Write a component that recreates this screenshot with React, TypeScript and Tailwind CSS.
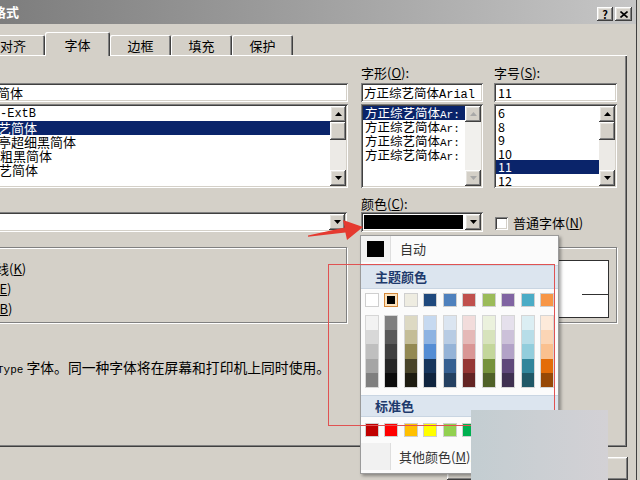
import React from "react";

const RAISED =
  "shadow-[inset_-1px_-1px_#404040,inset_1px_1px_#ffffff,inset_-2px_-2px_#808080,inset_2px_2px_#e6e4df]";
const SUNKEN =
  "shadow-[inset_1px_1px_#808080,inset_-1px_-1px_#ffffff,inset_2px_2px_#404040,inset_-2px_-2px_#d4d0c8]";
const ETCHED = "border border-[#808080] shadow-[inset_1px_1px_#ffffff,1px_1px_#ffffff]";

function Tri({ up, disabled }: { up?: boolean; disabled?: boolean }) {
  return (
    <svg width="7" height="4" viewBox="0 0 7 4">
      <path d={up ? "M3.5 0 L7 4 L0 4Z" : "M0 0 L7 0 L3.5 4Z"} fill={disabled ? "#a8a8a8" : "#000000"} />
    </svg>
  );
}

function SBtn({ up, disabled }: { up?: boolean; disabled?: boolean }) {
  return (
    <div className={`w-[16px] h-[16px] shrink-0 bg-[#d4d0c8] flex items-center justify-center ${RAISED}`}>
      <Tri up={up} disabled={disabled} />
    </div>
  );
}

function ScrollBar({ thumb, disabled }: { thumb?: boolean; disabled?: boolean }) {
  return (
    <div className={`w-[16px] h-full flex flex-col ${disabled ? "bg-[#f1f0ed]" : "bg-[#eceae6]"}`}>
      <SBtn up disabled={disabled} />
      {thumb && <div className={`w-[16px] h-[18px] shrink-0 bg-[#d4d0c8] ${RAISED}`} />}
      <div className="flex-1" />
      <SBtn disabled={disabled} />
    </div>
  );
}

const THEME_TOP = ["#ffffff", "#000000", "#eeece1", "#1f497d", "#4f81bd", "#c0504d", "#9bbb59", "#8064a2", "#4bacc6", "#f79646"];
const SHADES: string[][] = [
  ["#f2f2f2", "#d8d8d8", "#bfbfbf", "#a5a5a5", "#7f7f7f"],
  ["#7f7f7f", "#595959", "#3f3f3f", "#262626", "#0c0c0c"],
  ["#ddd9c3", "#c4bd97", "#938953", "#494429", "#1d1b10"],
  ["#c6d9f0", "#8db3e2", "#548dd4", "#17365d", "#0f243e"],
  ["#dbe5f1", "#b8cce4", "#95b3d7", "#366092", "#244061"],
  ["#f2dcdb", "#e5b9b7", "#d99694", "#953734", "#632423"],
  ["#ebf1dd", "#d7e3bc", "#c3d69b", "#76923c", "#4f6128"],
  ["#e5e0ec", "#ccc1d9", "#b2a2c7", "#5f497a", "#3f3151"],
  ["#dbeef3", "#b7dde8", "#92cddc", "#31859b", "#205867"],
  ["#fdeada", "#fbd5b5", "#fac08f", "#e36c09", "#974806"],
];
const STANDARD = ["#c00000", "#ff0000", "#ffc000", "#ffff00", "#92d050", "#00b050", "#00b0f0", "#0070c0", "#002060", "#7030a0"];

function Tab({ label, w, selected, first }: { label: string; w: string; selected?: boolean; first?: boolean }) {
  return (
    <div
      className={`${w} ${first ? "ml-[-20px]" : ""} ${
        selected ? "h-[24px] relative z-10 mb-[-1px]" : "h-[20px]"
      } bg-[#d4d0c8] rounded-t-[2px] shadow-[inset_1px_1px_#ffffff,inset_-1px_0_#404040,inset_-2px_0_#808080] flex items-center justify-center text-[13px] pt-[2px] ${
        first ? "pl-[20px] justify-start" : ""
      }`}
    >
      {label}
    </div>
  );
}

export default function App() {
  return (
    <div className="relative w-[640px] h-[480px] overflow-hidden bg-[#d4d0c8] text-black font-['Noto_Sans_CJK_SC','Noto_Sans',sans-serif] shadow-[inset_-3px_0_#d4d0c8,inset_-4px_0_#404040]">
      {/* title bar */}
      <div className="w-[636px] h-[24px] bg-linear-to-r from-[#7d7d7d] to-[#c6c6c6] flex items-center justify-between">
        <div className="ml-[-7px] text-white font-bold text-[13px] leading-none mt-[-2px]">格式</div>
        <div className="flex gap-[2px] mr-[4px] mt-[4px]">
          <div className={`w-[16px] h-[14px] bg-[#d4d0c8] flex items-center justify-center text-[11px] font-bold leading-none ${RAISED}`}>?</div>
          <div className={`w-[17px] h-[14px] bg-[#d4d0c8] flex items-center justify-center ${RAISED}`}>
            <svg width="8" height="7" viewBox="0 0 8 7">
              <path d="M0.5 0.5 L7.5 6.5 M7.5 0.5 L0.5 6.5" stroke="#000" strokeWidth="1.6" />
            </svg>
          </div>
        </div>
      </div>

      {/* tabs */}
      <div className="h-[31px] flex items-end">
        <Tab label="对齐" w="w-[65px]" first />
        <Tab label="字体" w="w-[65px]" selected />
        <Tab label="边框" w="w-[61px]" />
        <Tab label="填充" w="w-[61px]" />
        <Tab label="保护" w="w-[61px]" />
      </div>

      {/* panel */}
      <div className="ml-[-2px] w-[629px] h-[392px] shadow-[inset_1px_1px_#ffffff,inset_-1px_-1px_#404040,inset_-2px_-2px_#808080] pt-[10px] flex flex-col">
        {/* row 1 */}
        <div className="flex">
          <div className="ml-[-10px] w-[360px] flex flex-col">
            <div className="h-[16px]" />
            <div className={`mt-[2px] h-[19px] bg-white ${SUNKEN} text-[13px] leading-[19px] pl-[11px] overflow-hidden whitespace-nowrap`}>
              <span className="ml-[-2px]">简体</span>
            </div>
            <div className={`mt-[2px] h-[84px] bg-white ${SUNKEN} p-[2px] flex`}>
              <div className="flex-1 flex flex-col text-[13px] leading-[14px] pt-[1px] overflow-hidden whitespace-nowrap">
                <div className="h-[14px] pl-[10px] font-['Liberation_Mono',monospace] text-[12px]">-ExtB</div>
                <div className="h-[14px] pl-[8px] bg-[#0a246a] text-white">艺简体</div>
                <div className="h-[14px] pl-[8px]">亭超细黑简体</div>
                <div className="h-[14px] pl-[10px]">粗黑简体</div>
                <div className="h-[14px] pl-[9px]">艺简体</div>
              </div>
              <ScrollBar thumb />
            </div>
          </div>

          <div className="ml-[13px] w-[122px] flex flex-col">
            <div className="h-[16px] text-[13px] leading-[16px] whitespace-nowrap">
              字形(<span className="underline">O</span>):
            </div>
            <div className={`mt-[2px] h-[19px] bg-white ${SUNKEN} text-[12.5px] leading-[19px] pl-[3px] overflow-hidden whitespace-nowrap`}>
              方正综艺简体<span className="font-['Liberation_Mono',monospace] text-[12px]">Arial</span>
            </div>
            <div className={`mt-[2px] h-[84px] bg-white ${SUNKEN} p-[2px] flex`}>
              <div className="flex-1 flex flex-col text-[12.5px] leading-[14px] overflow-hidden whitespace-nowrap">
                {[0, 1, 2, 3].map((i) => (
                  <div key={i} className={`h-[14px] pl-[2px] ${i === 0 ? "bg-[#0a246a] text-white" : ""}`}>
                    方正综艺简体<span className="font-['Liberation_Mono',monospace] text-[11px]">Ar:</span>
                  </div>
                ))}
              </div>
              <ScrollBar disabled />
            </div>
          </div>

          <div className="ml-[11px] w-[123px] flex flex-col">
            <div className="h-[16px] text-[13px] leading-[16px] whitespace-nowrap">
              字号(<span className="underline">S</span>):
            </div>
            <div className={`mt-[2px] h-[19px] bg-white ${SUNKEN} text-[12.5px] leading-[19px] pl-[4px]`}>11</div>
            <div className={`mt-[2px] h-[84px] bg-white ${SUNKEN} p-[2px] flex`}>
              <div className="flex-1 flex flex-col text-[12.5px] leading-[13.6px] overflow-hidden">
                {["6", "8", "9", "10", "11", "12"].map((s) => (
                  <div key={s} className={`h-[13.6px] pl-[2px] ${s === "11" ? "bg-[#0a246a] text-white" : ""}`}>
                    {s}
                  </div>
                ))}
              </div>
              <ScrollBar thumb />
            </div>
          </div>
        </div>

        {/* row 2 */}
        <div className="flex">
          <div className="ml-[-10px] w-[359px] flex flex-col">
            <div className="h-[16px] mt-[8px]" />
            <div className={`h-[20px] bg-white ${SUNKEN} p-[2px] flex justify-end`}>
              <SBtn />
            </div>
          </div>
          <div className="ml-[14px] w-[122px] flex flex-col">
            <div className="h-[16px] mt-[8px] text-[13px] leading-[16px] whitespace-nowrap">
              颜色(<span className="underline">C</span>):
            </div>
            <div className={`h-[20px] bg-white ${SUNKEN} p-[2px] flex gap-[1px]`}>
              <div className="flex-1 bg-black m-[1px]" />
              <SBtn />
            </div>
          </div>
          <div className="ml-[12px] flex flex-col">
            <div className="h-[16px] mt-[8px]" />
            <div className="h-[20px] flex items-center gap-[5px] pt-[2px]">
              <div className={`w-[13px] h-[13px] bg-white ${SUNKEN}`} />
              <span className="text-[13px] whitespace-nowrap">
                普通字体(<span className="underline">N</span>)
              </span>
            </div>
          </div>
        </div>

        {/* row 3 */}
        <div className="flex mt-[15px]">
          <div className={`ml-[-10px] w-[359px] h-[76px] ${ETCHED} flex flex-col pt-[11px] text-[13px] leading-[20px] whitespace-nowrap`}>
            <div className="pl-[7px]">
              线(<span className="underline">K</span>)
            </div>
            <div className="pl-[6px]">
              (<span className="underline">E</span>)
            </div>
            <div className="pl-[6px]">
              (<span className="underline">B</span>)
            </div>
          </div>
          <div className={`ml-[13px] w-[257px] h-[76px] ${ETCHED} pt-[12px] pl-[14px]`}>
            <div className="relative w-[234px] h-[58px] bg-white border border-[#303030]">
              <div className="absolute left-[206px] top-[33px] w-[27px] h-[1px] bg-[#303030]" />
            </div>
          </div>
        </div>

        {/* description */}
        <div className="mt-[35px] ml-[-1px] h-[18px] text-[13.8px] leading-[18px] whitespace-nowrap">
          <span className="font-['Liberation_Mono',monospace] text-[11px]">Type</span> 字体。同一种字体将在屏幕和打印机上同时使用。
        </div>
      </div>

      {/* bottom buttons */}
      <div className="w-[636px] mt-[10px] flex justify-end gap-[31px] pr-[8px]">
        <div className={`w-[75px] h-[23px] bg-[#d4d0c8] ${RAISED} text-[13px] flex items-center justify-center`}>确定</div>
        <div className={`w-[75px] h-[23px] bg-[#d4d0c8] ${RAISED} text-[13px] flex items-center justify-center`}>取消</div>
      </div>

      {/* colour popup */}
      <div className="absolute left-[360px] top-[235px] w-[199px] h-[239px] bg-[#fbfbfb] border border-[#9a9a9a] shadow-[2px_2px_3px_rgba(0,0,0,0.35)] flex flex-col z-20">
        <div className="h-[26px] flex shrink-0">
          <div className="w-[30px] h-full bg-[#f3f3f3] border-r border-[#dedede] flex items-center justify-center pr-[1px]">
            <div className="w-[17px] h-[16px] bg-black" />
          </div>
          <div className="pl-[9px] flex items-center text-[13px] text-[#333]">自动</div>
        </div>
        <div className="mt-[3px] h-[24px] shrink-0 bg-[#dce5ef] border-y border-[#c9d5e2] pl-[14px] flex items-center text-[13px] font-bold text-[#1e3a6c]">
          主题颜色
        </div>
        <div className="mt-[4px] h-[14px] shrink-0 flex gap-[5.45px] pl-[4px]">
          {THEME_TOP.map((c, i) =>
            i === 1 ? (
              <div key={i} className="w-[14px] h-[14px] border border-[#d4883a] bg-[#fde3bd] p-[2px]">
                <div className="w-full h-full bg-black" />
              </div>
            ) : (
              <div key={i} className="w-[14px] h-[14px] border border-[#cfcfcf]" style={{ backgroundColor: c }} />
            )
          )}
        </div>
        <div className="mt-[8px] h-[73px] shrink-0 flex gap-[5.45px] pl-[4px]">
          {SHADES.map((col, i) => (
            <div key={i} className="w-[14px] h-full border border-[#d6d6d6] flex flex-col">
              {col.map((c, j) => (
                <div key={j} className="flex-1" style={{ backgroundColor: c }} />
              ))}
            </div>
          ))}
        </div>
        <div className="mt-[7px] h-[22px] shrink-0 bg-[#dce5ef] border-y border-[#c9d5e2] pl-[14px] flex items-center text-[13px] font-bold text-[#1e3a6c]">
          标准色
        </div>
        <div className="mt-[6px] h-[14px] shrink-0 flex gap-[5.45px] pl-[4px]">
          {STANDARD.map((c, i) => (
            <div key={i} className="w-[14px] h-[14px] border border-[#cfcfcf]" style={{ backgroundColor: c }} />
          ))}
        </div>
        <div className="mt-[6px] h-[27px] flex shrink-0">
          <div className="w-[30px] h-full bg-[#f1f1f1] border-r border-[#dedede]" />
          <div className="pl-[8px] flex items-center text-[13px] text-[#333] whitespace-nowrap">
            其他颜色(<span className="underline">M</span>)...
          </div>
        </div>
      </div>

      {/* red highlight box */}
      <div className="absolute left-[328px] top-[264px] w-[227px] h-[162px] border border-[#e05252] z-30" />

      {/* red arrow */}
      <svg className="absolute left-[300px] top-[212px] z-30" width="70" height="32" viewBox="0 0 70 32">
        <polygon points="8,23.5 44.6,15.5 43,8 63,15 47,28 45.4,20.5 8,24.8" fill="#e53a30" />
      </svg>

      {/* watermark patch */}
      <div className="absolute left-[471px] top-[410px] w-[137px] h-[70px] bg-linear-to-r from-[#c3cdd1] to-[#d3d1d5] z-40" />
    </div>
  );
}
